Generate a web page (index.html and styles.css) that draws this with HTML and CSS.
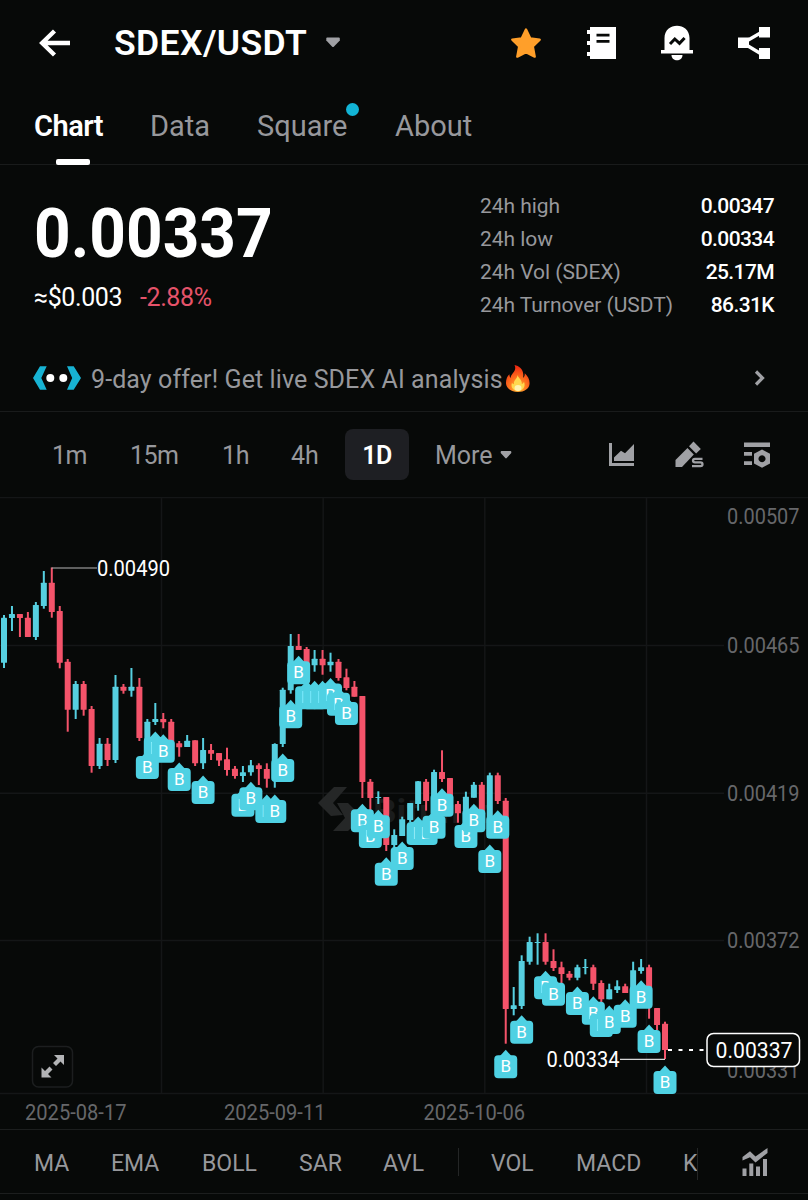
FILE: index.html
```html
<!DOCTYPE html>
<html lang="en">
<head>
<meta charset="utf-8">
<title>SDEX/USDT</title>
<link rel="stylesheet" href="styles.css">
</head>
<body>
<div class="app">
  <header class="topbar">
    <svg class="back" width="32" height="28" viewBox="0 0 32 28"><path d="M15.5 2 3.2 14l12.3 12M3.5 14H31" fill="none" stroke="#fff" stroke-width="4.4"/></svg>
    <h1 class="pair">SDEX/USDT</h1>
    <svg class="caret" width="14" height="11" viewBox="0 0 14 11"><path d="M1.2.5h11.6q1 0 1 1v2L8 9.600q-1 1-2 0L.3 3.5v-2q0-1 .9-1z" fill="#a0a1a5"/></svg>
    <nav class="actions">
      <svg width="32" height="36" viewBox="0 0 32 36"><path d="M16 4.500l4.300 9 9.400 1.200-6.900 6.700 1.900 10.200L16 27.200 7.300 31.600l1.900-10.200-6.900-6.700 9.400-1.200z" fill="#ff9f2a" stroke="#ff9f2a" stroke-width="2.400" stroke-linejoin="round"/></svg>
      <svg width="32" height="36" viewBox="0 0 32 36"><path d="M5 2h26v32H5v-3H2v-4h3v-7H2v-4h3V9H2V5h3z" fill="#fff"/><path d="M11.500 10.200h13M11.500 16.400h13" stroke="#070908" stroke-width="2.800"/></svg>
      <svg width="34" height="38" viewBox="0 0 34 38"><path d="M4.500 26V14C4.500-2.500 29.500-2.500 29.500 14v12H33v3.500H1V26z" fill="#fff"/><path d="M11.500 31h11c0 7-11 7-11 0z" fill="#fff"/><path d="M10 20l4.800-5 4.700 4.300L24.600 14" fill="none" stroke="#070908" stroke-width="3"/></svg>
      <svg width="34" height="36" viewBox="0 0 34 36"><path d="M6 18 26 6.500M6 18l20 12" stroke="#fff" stroke-width="3.400"/><path d="M1 12.500h11v10.500H1zM22 2h11v10.500H22zM22 23h11v11H22z" fill="#fff"/></svg>
    </nav>
  </header>

  <nav class="tabs">
    <a class="tab active">Chart</a>
    <a class="tab data">Data</a>
    <a class="tab square">Square<i class="dot"></i></a>
    <a class="tab about">About</a>
  </nav>

  <section class="quote">
    <div class="price-col">
      <div class="price">0.00337</div>
      <div class="sub"><span class="usd">≈$0.003</span><span class="chg">-2.88%</span></div>
    </div>
    <dl class="stats">
      <div><dt>24h high</dt><dd>0.00347</dd></div>
      <div><dt>24h low</dt><dd>0.00334</dd></div>
      <div><dt>24h Vol (SDEX)</dt><dd>25.17M</dd></div>
      <div><dt>24h Turnover (USDT)</dt><dd>86.31K</dd></div>
    </dl>
  </section>

  <section class="offer">
    <svg class="ai" width="50" height="26" viewBox="0 0 50 26"><path d="M8 1.300h6.700L9.300 13l5.400 11.800H8L1 13zM35 1.300h6.700L49 13l-7.300 11.800H35L40.200 13z" fill="#17b3d3"/><circle cx="18.300" cy="13" r="4" fill="#fff"/><circle cx="31.300" cy="13" r="4" fill="#fff"/></svg>
    <span class="offer-text">9-day offer! Get live SDEX AI analysis</span>
    <svg class="fire" width="26" height="29" viewBox="0 0 26 29">
      <defs><radialGradient id="fl" cx=".5" cy=".85" r=".8"><stop offset="0" stop-color="#ffc43a"/><stop offset=".4" stop-color="#ff7d20"/><stop offset="1" stop-color="#f02a12"/></radialGradient></defs>
      <path d="M9.500 1c4.500.8 8.500 4 8.800 9.500.1 1.500-.1 2.500-.2 3.300 1.300-.8 1.900-2.500 1.600-4.500 3.500 3 5.300 7 4.800 11-.6 4.700-5.200 7.700-11.500 7.700S1.200 24.500 1 19.500c-.2-4 1.200-7.500 3.500-9.300-.1 1.800.2 3 1.200 3.800C5.500 9.500 12.500 7.500 9.500 1z" fill="url(#fl)"/>
      <path d="M12.500 11c.5 3 4.800 4.700 4.300 9 1-.3 1.800-1 2.200-2.200 2 5.200-1.500 9.200-6 9.200s-7.700-3.500-6-8.200c.5 1 1.200 1.400 2 1.400-.8-4 3.500-5.500 3.500-9.200z" fill="#ffd84e"/>
      <ellipse cx="13" cy="24" rx="3.500" ry="3" fill="#fff3b0"/>
    </svg>
    <svg class="chev" width="12" height="18" viewBox="0 0 12 18"><path d="M2 2.500 8.500 9 2 15.500" fill="none" stroke="#a0a1a5" stroke-width="3.200"/></svg>
  </section>

  <nav class="frames">
    <a class="f1">1m</a><a class="f2">15m</a><a class="f3">1h</a><a class="f4">4h</a><a class="on">1D</a>
    <a class="more">More</a>
    <svg class="mcaret" width="12" height="10" viewBox="0 0 12 10"><path d="M1.500 1h9q.8 0 .8 1v1L6.700 8q-.7.800-1.400 0L.7 3V2q0-1 .8-1z" fill="#a0a1a5"/></svg>
    <span class="tools">
      <svg width="28" height="28" viewBox="0 0 28 28"><path d="M2 2h3v20h22v3H2z" fill="#a0a1a5"/><path d="M7 20v-3.500l7-6.800 4 2.600L27 3v17z" fill="#a0a1a5"/></svg>
      <svg width="30" height="30" viewBox="0 0 30 30"><path d="M1.500 27v-7L13.500 8l6.300 6.500L8 27z" fill="#a0a1a5"/><path d="M15 6.200 19.500 1.500 26.800 9l-4.700 4.500z" fill="#a0a1a5"/><path d="M28.500 18.800h-7.500q-2 0-2 1.800t2 1.800h5.500q2 0 2 1.900t-2 1.900H18" fill="none" stroke="#a0a1a5" stroke-width="2.300"/></svg>
      <svg width="28" height="28" viewBox="0 0 28 28"><path d="M1 1.500h26v4.500H1zM1 11h8v3.800H1zM1 20.200h8V24H1z" fill="#a0a1a5"/><path fill-rule="evenodd" d="M19 8.500l8 4.300v9.600l-8 4.400-8-4.400v-9.600zM19 14.200a3.500 3.500 0 1 0 .01 0z" fill="#a0a1a5"/></svg>
    </span>
  </nav>

  <main class="chart"><svg id="plot" width="808" height="632" viewBox="0 497 808 632"></svg></main>

  <nav class="indicators">
    <a class="i1">MA</a><a class="i2">EMA</a><a class="i3">BOLL</a><a class="i4">SAR</a><a class="i5">AVL</a>
    <i class="sep"></i>
    <a class="i6">VOL</a><a class="i7">MACD</a><span class="cut"><a>KDJ</a></span>
    <svg class="ind-icon" width="28" height="30" viewBox="0 0 28 30"><path d="M1.500 12.500v-3.500L9 3.200l5.500 5.200L26.500 0v5L14.500 14.500 9 9.300z" fill="#a0a1a5"/><path d="M1.500 20.500h4V28h-4zM8.300 15.500h4V28h-4zM15 18.500h4V28h-4zM22 11h4v17h-4z" fill="#a0a1a5"/></svg>
  </nav>
</div>
<script src="chart.js"></script>
</body>
</html>
```
FILE: styles.css
```css
* { box-sizing: border-box; }
body { margin: 0; background: #070908; color: #fff; font-family: Roboto, "Liberation Sans", sans-serif; }
.app { width: 808px; height: 1200px; overflow: hidden; display: flex; flex-direction: column; }
svg { display: block; flex: none; }
a { white-space: nowrap; }

.topbar { height: 85px; display: flex; align-items: center; padding: 0 37px 0 39px; }
.pair { margin: 0 0 0 43px; width: 193px; font-size: 35.500px; line-height: 42px; font-weight: 600; letter-spacing: .4px; white-space: nowrap; padding-top: 1px; }
.caret { margin-left: 19px; }
.actions { margin-left: auto; display: flex; align-items: center; gap: 43px; }

.tabs { height: 80px; display: flex; align-items: flex-start; padding: 23px 0 0 34px; border-bottom: 1px solid #191b1b; font-size: 29px; line-height: 36px; color: #97989c; }
.tab { position: relative; width: 116px; }
.tab.data { width: 107px; }
.tab.square { width: 138px; }
.tab.active { color: #fff; font-weight: 600; letter-spacing: -.5px; }
.tab.active::after { content: ""; position: absolute; left: 22px; top: 51px; width: 34px; height: 6px; border-radius: 2px; background: #fff; }
.dot { position: absolute; left: 89px; top: -5px; width: 13px; height: 13px; border-radius: 50%; background: #12b4d6; }

.quote { height: 181px; display: flex; justify-content: space-between; padding: 25px 34px 0 34px; }
.price { font-size: 69px; line-height: 88px; height: 90px; font-weight: 700; transform: scaleX(.927); transform-origin: 0 0; }
.sub { display: flex; font-size: 25px; line-height: 34px; padding-top: 1px; }
.usd { width: 106px; }
.usd, .chg { letter-spacing: -.4px; }
.chg { color: #e5536a; }
.stats { margin: 0; width: 294px; color: #97989c; font-size: 21px; line-height: 33px; }
.stats div { display: flex; justify-content: space-between; white-space: nowrap; }
.stats dt { letter-spacing: -.04px; }
.stats dd { margin: 0; color: #fff; font-weight: 500; letter-spacing: -.6px; }

.offer { height: 66px; display: flex; align-items: center; padding: 0 42px 1px 32px; border-bottom: 1px solid #191b1b; font-size: 25px; color: #97989c; }
.offer-text { margin-left: 9px; padding-top: 2px; width: 414px; white-space: nowrap; letter-spacing: .1px; }
.chev { margin-left: auto; }

.frames { height: 85px; display: flex; align-items: center; padding-left: 52px; font-size: 25px; color: #97989c; }
.frames a { padding-top: 2px; }
.f1 { width: 78px; letter-spacing: -.5px; }
.f2 { width: 92px; letter-spacing: -.5px; }
.f3 { width: 69px; letter-spacing: -.3px; }
.f4 { width: 54px; }
.frames .on { width: 64px; height: 51px; line-height: 49px; border-radius: 8px; background: #1e1f23; color: #fff; font-weight: 600; text-align: center; letter-spacing: -.5px; }
.more { margin-left: 26px; width: 65px; }
.tools { margin-left: auto; display: flex; align-items: center; gap: 39px; padding-right: 37px; }

.chart { height: 632px; }

.indicators { flex: 1; display: flex; align-items: flex-start; margin-bottom: 6px; border-top: 1px solid #1c1e1e; border-bottom: 1px solid #1c1e1e; padding: 18px 0 0 34px; font-size: 23px; line-height: 32px; color: #97989c; }
.i1 { width: 77px; }
.i2 { width: 91px; }
.i3 { width: 97px; }
.i4 { width: 84px; }
.i5 { width: 75px; }
.sep { width: 1px; height: 28px; background: #242626; margin-right: 32px; }
.i6 { width: 85px; }
.i7 { width: 107px; }
.cut { width: 15px; overflow: hidden; border-right: 1px solid #242626; }
.ind-icon { margin-left: 43px; }

#plot text { font-family: Roboto, sans-serif; font-size: 21.500px; fill: #fff; }
#plot .axis { fill: #66676a; }
#plot .badge { font-size: 17px; text-anchor: middle; }
#plot .mark { font-weight: 700; font-size: 34px; fill: #1a1c1c; }
#plot .grid { stroke: #141617; stroke-width: 1.500; }
```
FILE: chart.js
```js
const UP = '#56cfe0', DOWN = '#f4536a';
const STEP = 7.964, X0 = 4;
const cx = i => X0 + i * STEP;

// [direction, high, body top, body bottom, low]
const candles = [
['u',615,617.7,662.7,668],['u',606,614,618,631],['d',614,614,618,637],['d',612,617.7,637,637],['u',602,605,637,640],
['u',571,582.7,606,608.7],['d',567.5,582.7,612,617.7],['d',606,611,662.7,668.3],['d',659,661.7,709.7,731.7],['u',681,684,709.7,719],
['d',681,684,709.7,715.7],['d',706,709,766,772.7],['u',738,743.7,766,769],['d',738,743.7,760,766],['u',675,686.7,760,763],
['d',684,686.7,690.7,693.7],['u',668,686.7,690.7,696.7],['d',678,686.7,738,741],['u',719,721.7,755,757],['u',703,719,722,725],
['d',713,719,722.3,728.3],['d',719,721.7,747,747],['d',741,743.3,747.3,756.7],['u',735,740.7,747,747],['d',740.3,740.3,763.3,766],
['u',738,750,763.3,769],['d',744,750,753.7,760],['d',753,753,760.5,766],['d',747.7,759.3,770,775.7],['d',766,768.7,776,778.7],
['u',766,772.3,776,782],['u',760,765.3,772.3,775.7],['d',763.3,765.3,769,785],['d',763.3,769,778.7,787.7],['u',743.3,744,780,787.7],
['u',687.7,689.7,744,747],['u',634,646,690.3,693.7],['d',634,646,650,650],['d',647,649,664,668],['u',650,658.7,665.3,671.7],
['d',650,658.7,665.3,674.7],['u',652.7,661.7,665.3,671.7],['d',659,661.7,678,680.7],['d',668.7,677.3,688,690.3],['d',681,686.7,696.7,696.7],
['d',696,696,782,798],['d',779,781.7,798,812],['u',791.3,797,798,804],['d',797,797,845,851],['u',829.3,835,845,850],
['u',816.7,819.3,836,836],['u',803,803,820,822],['u',781,781.3,804,810.7],['d',779,781.7,801,810.7],['u',769.7,772,816,816],
['d',750.3,772,779,782],['d',778,778,796,796],['d',801,804,813.3,822.7],['u',791.7,796.7,825,825],['u',782,784.7,797.7,797.7],
['d',782,784.7,812,812],['u',772.7,775.3,838,838],['d',772.7,775.3,801,804],['d',798,800.7,1009,1043.7],['u',987,1005.3,1009,1015.3],
['u',955.3,961,1006,1009],['u',936.7,942,961.7,964.7],['u',933.3,942,943,964.7],['d',933.3,942,961.7,964.7],['d',949.3,961,968,971],
['d',961.7,967.3,974,983],['d',971,973.7,977.7,980.3],['u',964.7,967.3,977.7,980.3],['u',959,967,968,974.3],['d',964.7,967.3,983.7,990],
['d',980.3,983,999.3,1003],['u',983.7,989.3,999.3,999.3],['u',980.3,986.3,990,993],['d',983.7,986.3,993,993],['u',961.7,970.3,1000,1000],
['u',959,967.3,971,973.7],['d',964.7,967.3,1006,1018.7],['d',1008,1008,1025,1030],['d',1021.7,1023.7,1050,1059]
];

// [candle index, bottom edge of the buy badge]
const buys = [[18,779],[19,760],[20,762.7],[22,791],[25,804],[30,816.7],[31,810.3],[33,823],[34,823],[35,782],[36,728.3],
[37,684.3],[38,709.3],[39,709.3],[40,709.3],[41,706.5],[42,715.7],[43,725],[45,832.3],[46,848],[47,838.3],[48,885.7],[50,870],
[52,845],[53,845],[54,838.7],[55,816.7],[58,848],[59,832.3],[61,873],[62,838.7],[63,1078.3],[65,1043.7],[68,999.3],
[69,1005.7],[72,1015],[74,1024.7],[75,1037],[76,1034],[78,1027.7],[80,1008.7],[81,1053],[83,1094]];

const line = (x1, y1, x2, y2, extra) => `<line x1="${x1}" y1="${y1}" x2="${x2}" y2="${y2}" ${extra}/>`;
const label = (x, y, w, t, cls = '') => `<text class="${cls}" x="${x}" y="${y}" textLength="${w}" lengthAdjust="spacingAndGlyphs">${t}</text>`;

let out = '';
[161.5, 323.2, 484.8, 646.5].forEach(x => out += line(x, 498, x, 1093, 'class="grid"'));
[497.5, 645.5, 793.3, 940.5, 1093.5].forEach(y => out += line(0, y, y > 500 && y < 1000 ? 724 : 808, y, 'class="grid"'));

out += '<path d="M318 803l16-16h13l-14 16 10 12-12 1zM337 803h11l14 14-14 14h-15l12-13z" fill="#252727"/>';
out += label(373, 823, 116, 'Bitunix', 'mark');

[['0.00507',523.5],['0.00465',653],['0.00419',800.5],['0.00372',948],['0.00331',1077.5]]
  .forEach(([t, y]) => out += label(727, y, 72.500, t, 'axis'));
[['2025-08-17',25],['2025-09-11',224],['2025-10-06',423.5]]
  .forEach(([t, x]) => out += label(x, 1119.5, 101.500, t, 'axis'));

candles.forEach(([d, h, t, b, l], i) => {
  const c = d === 'u' ? UP : DOWN, x = cx(i);
  out += `<rect x="${x - 1}" y="${h}" width="2" height="${l - h}" fill="${c}"/>`;
  out += `<rect x="${x - 3}" y="${t}" width="6" height="${Math.max(1, b - t)}" rx=".5" fill="${c}"/>`;
});
buys.forEach(([i, b]) => {
  const x = cx(i);
  out += `<path d="M${x - 6} ${b - 22}L${x} ${b - 28.5}L${x + 6} ${b - 22}z" fill="#4fd1e3"/>`;
  out += `<rect x="${x - 11.5}" y="${b - 23}" width="23" height="23" rx="4" fill="#4fd1e3"/>`;
  out += `<text class="badge" x="${x}" y="${b - 6}">B</text>`;
});

out += line(51.500, 568, 97, 568, 'stroke="#b5b6b6" stroke-width="1.2"') + label(97, 575.5, 73, '0.00490');
out += line(620, 1059.3, 665, 1059.3, 'stroke="#d5d6d6" stroke-width="1.2"') + label(546.5, 1067, 73, '0.00334');
out += line(668, 1050, 706, 1050, 'stroke="#fff" stroke-width="1.8" stroke-dasharray="4 6.500"');
out += '<rect x="707" y="1033.500" width="92.500" height="33" rx="6.500" fill="#070908" stroke="#fff" stroke-width="1.500"/>';
out += label(715.5, 1057.5, 77, '0.00337');

out += '<rect x="32.500" y="1046.500" width="40" height="40.500" rx="6" fill="#070908" stroke="#1c1e1f" stroke-width="1.500"/>';
out += '<path d="M54 1055h10v10l-3.500-3.500-4.500 4.500-3-3 4.500-4.500zM41.500 1067.500l3.500 3.500 4.500-4.500 3 3L48 1074l3.500 3.500h-10z" fill="#b3b4b6"/>';
document.getElementById('plot').innerHTML = out;
```
